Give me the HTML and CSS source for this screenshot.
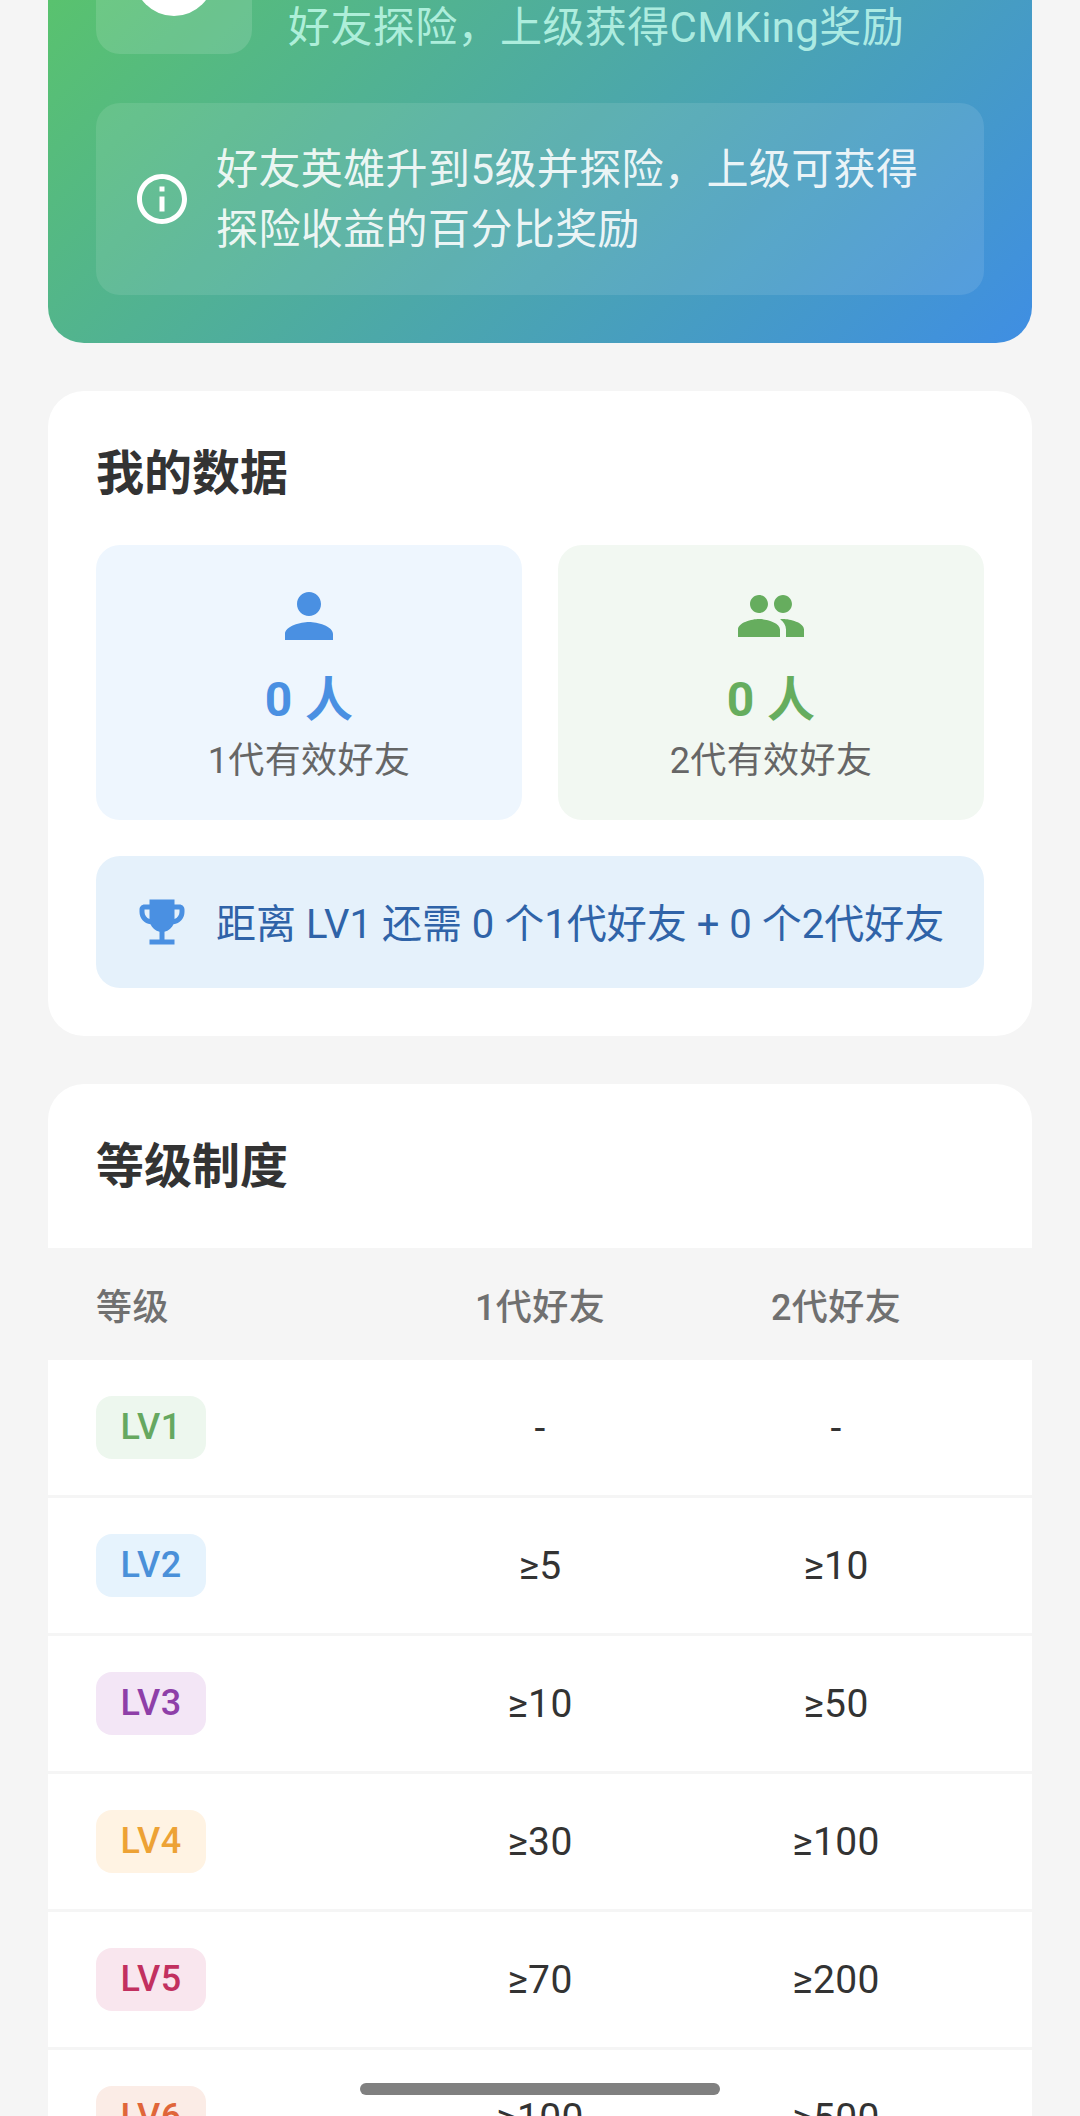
FILE: index.html
```html
<!DOCTYPE html>
<html lang="zh-CN">
<head>
    <meta charset="UTF-8">
    <meta name="viewport" content="width=device-width, initial-scale=1.0">
    <title>等级制度</title>
    <link rel="stylesheet" href="styles.css">
</head>
<body>
    <div class="page">
        <section class="hero">
            <div class="hero-top">
                <div class="hero-tile"><span class="hero-badge"></span></div>
                <p class="hero-desc">好友探险，上级获得CMKing奖励</p>
            </div>
            <div class="hero-note">
                <svg class="icon-info" viewBox="0 0 24 24"><path d="M11 7h2v2h-2zm0 4h2v6h-2zm1-9C6.48 2 2 6.48 2 12s4.48 10 10 10 10-4.48 10-10S17.52 2 12 2zm0 18c-4.41 0-8-3.59-8-8s3.59-8 8-8 8 3.59 8 8-3.59 8-8 8z"/></svg>
                <p>好友英雄升到5级并探险，上级可获得探险收益的百分比奖励</p>
            </div>
        </section>

        <section class="card">
            <h2>我的数据</h2>
            <div class="stats">
                <div class="stat stat-blue">
                    <svg class="stat-icon" viewBox="0 0 24 24"><path d="M12 12c2.21 0 4-1.79 4-4s-1.79-4-4-4-4 1.79-4 4 1.79 4 4 4zm0 2c-2.67 0-8 1.34-8 4v2h16v-2c0-2.66-5.33-4-8-4z"/></svg>
                    <div class="stat-value">0 人</div>
                    <div class="stat-label">1代有效好友</div>
                </div>
                <div class="stat stat-green">
                    <svg class="stat-icon" viewBox="0 0 24 24"><path d="M16 11c1.66 0 2.99-1.34 2.99-3S17.66 5 16 5c-1.66 0-3 1.34-3 3s1.34 3 3 3zm-8 0c1.66 0 2.99-1.34 2.99-3S9.66 5 8 5C6.34 5 5 6.34 5 8s1.34 3 3 3zm0 2c-2.33 0-7 1.17-7 3.5V19h14v-2.5c0-2.33-4.67-3.5-7-3.5zm8 0c-.29 0-.62.02-.97.05 1.16.84 1.97 1.97 1.97 3.45V19h6v-2.5c0-2.33-4.67-3.5-7-3.5z"/></svg>
                    <div class="stat-value">0 人</div>
                    <div class="stat-label">2代有效好友</div>
                </div>
            </div>
            <div class="progress">
                <svg class="icon-trophy" viewBox="0 0 24 24"><path d="M19 5h-2V3H7v2H5c-1.1 0-2 .9-2 2v1c0 2.55 1.92 4.63 4.39 4.94.63 1.5 1.98 2.63 3.61 2.96V19H7v2h10v-2h-4v-3.1c1.63-.33 2.98-1.46 3.61-2.96C19.08 12.63 21 10.55 21 8V7c0-1.1-.9-2-2-2zM5 8V7h2v3.82C5.84 10.4 5 9.3 5 8zm14 0c0 1.3-.84 2.4-2 2.82V7h2v1z"/></svg>
                <span>距离 LV1 还需 0 个1代好友 + 0 个2代好友</span>
            </div>
        </section>

        <section class="card card-table">
            <h2>等级制度</h2>
            <div class="table-head">
                <span class="col-level">等级</span>
                <span>1代好友</span>
                <span>2代好友</span>
            </div>
            <div class="table-row">
                <span class="col-level"><b class="level lv1">LV1</b></span>
                <span>-</span>
                <span>-</span>
            </div>
            <div class="table-row">
                <span class="col-level"><b class="level lv2">LV2</b></span>
                <span>≥5</span>
                <span>≥10</span>
            </div>
            <div class="table-row">
                <span class="col-level"><b class="level lv3">LV3</b></span>
                <span>≥10</span>
                <span>≥50</span>
            </div>
            <div class="table-row">
                <span class="col-level"><b class="level lv4">LV4</b></span>
                <span>≥30</span>
                <span>≥100</span>
            </div>
            <div class="table-row">
                <span class="col-level"><b class="level lv5">LV5</b></span>
                <span>≥70</span>
                <span>≥200</span>
            </div>
            <div class="table-row">
                <span class="col-level"><b class="level lv6">LV6</b></span>
                <span>≥100</span>
                <span>≥500</span>
            </div>
        </section>
    </div>

    <div class="home-bar"></div>
</body>
</html>
```

FILE: styles.css
```css
html, body {
    height: 2116px;
    overflow: hidden;
}

body {
    font-family: Roboto, "Noto Sans CJK SC", sans-serif;
    margin: 0;
    padding: 0;
    background-color: #f5f5f5;
    color: #333;
    position: relative;
    letter-spacing: 0.4px;
}

p {
    margin: 0;
}

/* page is scrolled, the top of the hero is above the window */
.page {
    margin-top: -150px;
    padding: 0 48px;
    display: flex;
    flex-direction: column;
    gap: 48px;
}

.hero {
    padding: 48px;
    border-radius: 36px;
    background: linear-gradient(135deg, #5cc861, #3f8ee3);
}

.hero-top {
    display: flex;
    gap: 36px;
    height: 156px;
}

.hero-tile {
    width: 156px;
    height: 156px;
    border-radius: 24px;
    background-color: rgba(255, 255, 255, 0.13);
    display: flex;
    align-items: center;
    justify-content: center;
    flex-shrink: 0;
}

.hero-badge {
    width: 80px;
    height: 80px;
    border-radius: 50%;
    background-color: white;
}

.hero-desc {
    align-self: flex-end;
    margin-bottom: -5px;
    font-size: 42px;
    line-height: 62px;
    color: rgba(200, 255, 240, 0.8);
}

.hero-note {
    margin-top: 49px;
    padding: 2px 36px 0;
    height: 192px;
    box-sizing: border-box;
    border-radius: 24px;
    background-color: rgba(255, 255, 255, 0.1);
    display: flex;
    align-items: center;
    gap: 24px;
}

.hero-note p {
    font-size: 42px;
    line-height: 60px;
    color: rgba(255, 255, 255, 0.9);
}

.icon-info {
    width: 60px;
    height: 60px;
    margin-top: -2px;
    fill: white;
    flex-shrink: 0;
}

.card {
    padding: 48px;
    border-radius: 36px;
    background-color: white;
}

.card h2 {
    margin: 0 0 36px;
    font-size: 48px;
    line-height: 70px;
    font-weight: 700;
    color: #333;
    letter-spacing: 0;
}

.stats {
    display: flex;
    gap: 36px;
}

.stat {
    flex: 1;
    padding: 35px 0 32px;
    border-radius: 24px;
    display: flex;
    flex-direction: column;
    align-items: center;
}

.stat-blue {
    background-color: #eef6fe;
    color: #4a90e2;
}

.stat-green {
    background-color: #f2f8f2;
    color: #66ad5e;
}

.stat-icon {
    width: 72px;
    height: 72px;
    margin-bottom: 14px;
    fill: currentColor;
}

.stat-value {
    font-size: 48px;
    line-height: 68px;
    font-weight: 700;
}

.stat-label {
    font-size: 36px;
    line-height: 54px;
    color: #666;
}

.progress {
    margin-top: 36px;
    height: 132px;
    padding: 0 36px;
    border-radius: 24px;
    background-color: #e5f1fb;
    display: flex;
    align-items: center;
    gap: 24px;
    font-size: 40px;
    letter-spacing: 0;
    color: #2f63a8;
}

.progress span {
    margin-top: -3px;
}

.icon-trophy {
    width: 60px;
    height: 60px;
    fill: #4a90e2;
    flex-shrink: 0;
}

.card-table {
    padding: 48px 0 0;
}

.card-table h2 {
    margin: 0 48px 46px;
}

.table-head,
.table-row {
    display: grid;
    grid-template-columns: repeat(3, 1fr);
    align-items: center;
    padding: 0 48px;
    text-align: center;
}

.table-head {
    height: 112px;
    background-color: #f5f5f5;
    font-size: 36px;
    font-weight: 500;
    color: #707070;
}

.table-row {
    height: 135px;
    border-bottom: 3px solid #f5f5f5;
    font-size: 39px;
}

.col-level {
    text-align: left;
}

.level {
    display: inline-block;
    width: 110px;
    height: 63px;
    line-height: 63px;
    border-radius: 16px;
    text-align: center;
    font-size: 36px;
    font-weight: 500;
    vertical-align: middle;
}

.lv1 { background-color: #edf7ee; color: #66a860; }
.lv2 { background-color: #e6f3fd; color: #4a90d9; }
.lv3 { background-color: #f3e6f6; color: #8e3fa8; }
.lv4 { background-color: #fff3e3; color: #eda235; }
.lv5 { background-color: #f9e6ee; color: #c2305f; }
.lv6 { background-color: #fbece6; color: #e0663a; }

.home-bar {
    position: absolute;
    left: 360px;
    top: 2083px;
    width: 360px;
    height: 12px;
    border-radius: 6px;
    background-color: #808080;
}
```
